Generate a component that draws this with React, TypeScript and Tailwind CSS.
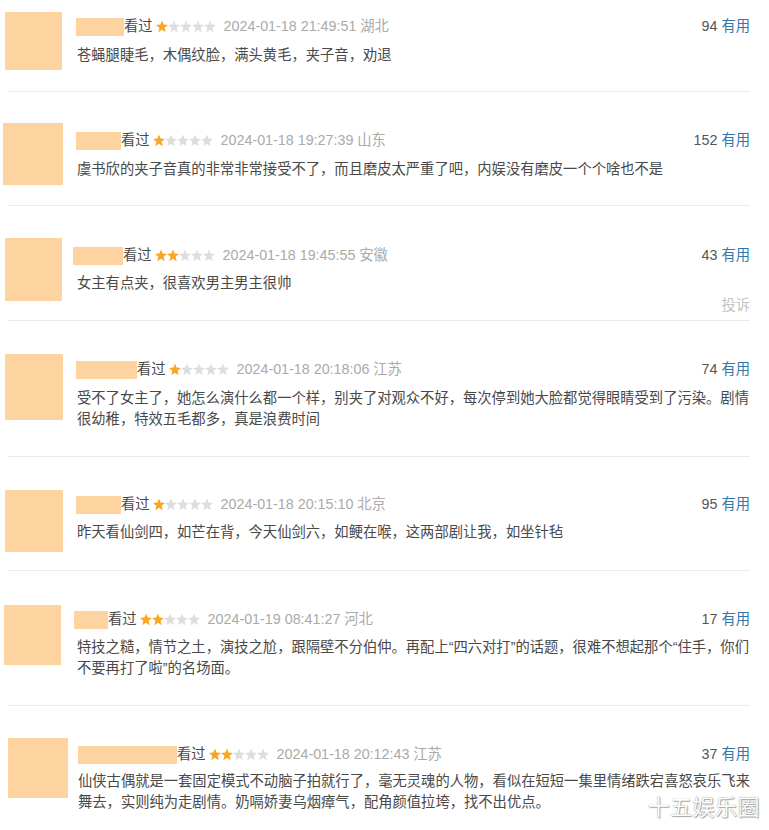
import React from "react";

type Block = {
  h: string;
  cell: string;
  av: string;
  hdr: string;
  name: string;
  stars: number;
  date: string;
  count: string;
  lines: string[];
  textMt: string;
  report?: boolean;
  last?: boolean;
};

const blocks: Block[] = [
  {
    h: "h-[92px]",
    cell: "w-[77px]",
    av: "mt-[12px] ml-[5px] w-[57px] h-[58px]",
    hdr: "mt-[16px]",
    name: "-ml-[1px] w-[48px]",
    stars: 1,
    date: "2024-01-18 21:49:51 湖北",
    count: "94",
    lines: ["苍蝇腿睫毛，木偶纹脸，满头黄毛，夹子音，劝退"],
    textMt: "mt-[9px]",
  },
  {
    h: "h-[114px]",
    cell: "w-[77px]",
    av: "mt-[31px] ml-[3px] w-[60px] h-[62px]",
    hdr: "mt-[38px]",
    name: "-ml-[1px] w-[45px]",
    stars: 1,
    date: "2024-01-18 19:27:39 山东",
    count: "152",
    lines: ["虞书欣的夹子音真的非常非常接受不了，而且磨皮太严重了吧，内娱没有磨皮一个个啥也不是"],
    textMt: "mt-[9px]",
  },
  {
    h: "h-[115px]",
    cell: "w-[77px]",
    av: "mt-[32px] ml-[5px] w-[57px] h-[63px]",
    hdr: "mt-[39px]",
    name: "-ml-[4px] w-[50px]",
    stars: 2,
    date: "2024-01-18 19:45:55 安徽",
    count: "43",
    lines: ["女主有点夹，很喜欢男主男主很帅"],
    textMt: "mt-[8px]",
    report: true,
  },
  {
    h: "h-[136px]",
    cell: "w-[77px]",
    av: "mt-[33px] ml-[5px] w-[58px] h-[66px]",
    hdr: "mt-[38px]",
    name: "-ml-[1px] w-[61px]",
    stars: 1,
    date: "2024-01-18 20:18:06 江苏",
    count: "74",
    lines: [
      "受不了女主了，她怎么演什么都一个样，别夹了对观众不好，每次停到她大脸都觉得眼睛受到了污染。剧情",
      "很幼稚，特效五毛都多，真是浪费时间",
    ],
    textMt: "mt-[9px]",
  },
  {
    h: "h-[114px]",
    cell: "w-[77px]",
    av: "mt-[33px] ml-[5px] w-[58px] h-[62px]",
    hdr: "mt-[37px]",
    name: "-ml-[1px] w-[45px]",
    stars: 1,
    date: "2024-01-18 20:15:10 北京",
    count: "95",
    lines: ["昨天看仙剑四，如芒在背，今天仙剑六，如鲠在喉，这两部剧让我，如坐针毡"],
    textMt: "mt-[8px]",
  },
  {
    h: "h-[135px]",
    cell: "w-[77px]",
    av: "mt-[34px] ml-[4px] w-[57px] h-[60px]",
    hdr: "mt-[38px]",
    name: "-ml-[3px] w-[34px]",
    stars: 2,
    date: "2024-01-19 08:41:27 河北",
    count: "17",
    lines: [
      "特技之糙，情节之土，演技之尬，跟隔壁不分伯仲。再配上“四六对打”的话题，很难不想起那个“住手，你们",
      "不要再打了啦”的名场面。",
    ],
    textMt: "mt-[8px]",
  },
  {
    h: "h-[124px]",
    cell: "w-[78px]",
    av: "mt-[32px] ml-[8px] w-[60px] h-[60px]",
    hdr: "mt-[38px]",
    name: "ml-0 w-[99px]",
    stars: 2,
    date: "2024-01-18 20:12:43 江苏",
    count: "37",
    lines: [
      "仙侠古偶就是一套固定模式不动脑子拍就行了，毫无灵魂的人物，看似在短短一集里情绪跌宕喜怒哀乐飞来",
      "舞去，实则纯为走剧情。奶嗝娇妻乌烟瘴气，配角颜值拉垮，找不出优点。",
    ],
    textMt: "mt-[7px]",
    last: true,
  },
];

function Star({ on }: { on: boolean }) {
  return (
    <svg width="12" height="13" viewBox="0 0 12 12" className="shrink-0">
      <polygon
        points="6,0 7.6,4.1 12,4.4 8.6,7.3 9.7,11.7 6,9.3 2.3,11.7 3.4,7.3 0,4.4 4.4,4.1"
        fill={on ? "#f9a623" : "#dedede"}
      />
    </svg>
  );
}

function Stars({ n }: { n: number }) {
  return (
    <div className="ml-[3px] flex w-[60px] items-center">
      {[0, 1, 2, 3, 4].map((i) => (
        <Star key={i} on={i < n} />
      ))}
    </div>
  );
}

export default function App() {
  return (
    <div
      className="relative h-[830px] w-[769px] overflow-hidden bg-white text-[14.3px] text-[#494949]"
      style={{ fontFamily: '"Liberation Sans", "Noto Sans CJK SC", sans-serif' }}
    >
      {blocks.map((b, idx) => (
        <div key={idx} className={`flex flex-col ${b.h}`}>
          <div className="flex items-start">
            <div className={`shrink-0 ${b.cell}`}>
              <div className={`bg-[#fdd39f] ${b.av}`} />
            </div>
            <div className={`mr-[19px] flex min-w-0 flex-1 flex-col ${b.hdr}`}>
              <div className="flex h-[20px] items-center leading-[20px]">
                <div className={`mt-[2px] h-[18px] shrink-0 bg-[#fdd39f] ${b.name}`} />
                <span className="text-[#494949]">看过</span>
                <Stars n={b.stars} />
                <span className="ml-[8px] text-[#aaaaaa]">{b.date}</span>
                <span className="ml-auto text-[#555555]">{b.count}</span>
                <span className="ml-[4px] text-[#3377aa]">有用</span>
              </div>
              <div className={`flex flex-col leading-[21px] ${b.textMt}`}>
                {b.lines.map((l, i) => (
                  <div key={i} className="whitespace-nowrap">
                    {l}
                  </div>
                ))}
              </div>
              {b.report && (
                <div className="mt-[1px] self-end leading-[21px] text-[#c4c4c4]">投诉</div>
              )}
            </div>
          </div>
          {!b.last && <div className="ml-[8px] mt-auto h-px w-[742px] bg-[#ebebeb]" />}
        </div>
      ))}
      <div
        className="absolute bottom-[10px] right-[9px] text-[22px] leading-[30px] tracking-[0.5px] text-white [text-shadow:0_0_1px_#777,1px_1px_1px_#aaa]"
        style={{ fontFamily: '"Noto Sans CJK SC", sans-serif' }}
      >
        十五娱乐圈
      </div>
    </div>
  );
}
